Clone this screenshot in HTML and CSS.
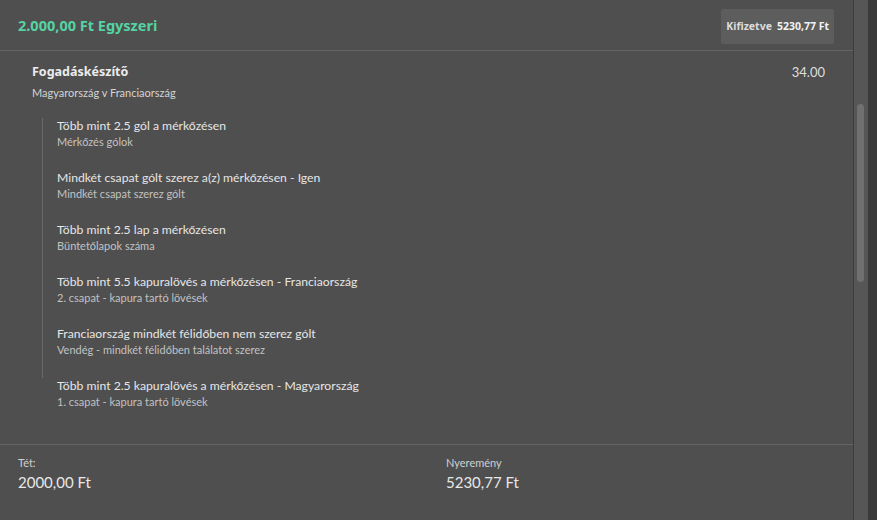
FILE: index.html
```html
<!DOCTYPE html>
<html lang="hu">

<head>
    <meta charset="UTF-8">
    <meta name="viewport" content="width=device-width, initial-scale=1.0">
    <title>Fogadás részletei</title>
    <link rel="stylesheet" href="styles.css">
</head>

<body>
    <div class="frame">
        <div class="panel">
            <header class="bet-header">
                <h1 class="bet-title">2.000,00 Ft Egyszeri</h1>
                <div class="paid-badge">
                    <span>Kifizetve</span>
                    <span class="paid-amount">5230,77 Ft</span>
                </div>
            </header>

            <section class="bet-body">
                <div class="market-row">
                    <div>
                        <h2 class="market-name">Fogadáskészítő</h2>
                        <div class="event-name">Magyarország v Franciaország</div>
                    </div>
                    <div class="odds">34.00</div>
                </div>

                <ul class="selections">
                    <li class="selection">
                        <div class="sel-title">Több mint 2.5 gól a mérkőzésen</div>
                        <div class="sel-sub">Mérkőzés gólok</div>
                    </li>
                    <li class="selection">
                        <div class="sel-title">Mindkét csapat gólt szerez a(z) mérkőzésen - Igen</div>
                        <div class="sel-sub">Mindkét csapat szerez gólt</div>
                    </li>
                    <li class="selection">
                        <div class="sel-title">Több mint 2.5 lap a mérkőzésen</div>
                        <div class="sel-sub">Büntetőlapok száma</div>
                    </li>
                    <li class="selection">
                        <div class="sel-title">Több mint 5.5 kapuralövés a mérkőzésen - Franciaország</div>
                        <div class="sel-sub">2. csapat - kapura tartó lövések</div>
                    </li>
                    <li class="selection">
                        <div class="sel-title">Franciaország mindkét félidőben nem szerez gólt</div>
                        <div class="sel-sub">Vendég - mindkét félidőben találatot szerez</div>
                    </li>
                    <li class="selection">
                        <div class="sel-title">Több mint 2.5 kapuralövés a mérkőzésen - Magyarország</div>
                        <div class="sel-sub">1. csapat - kapura tartó lövések</div>
                    </li>
                </ul>
            </section>

            <footer class="bet-footer">
                <div class="stat">
                    <div class="stat-label">Tét:</div>
                    <div class="stat-value">2000,00 Ft</div>
                </div>
                <div class="stat">
                    <div class="stat-label">Nyeremény</div>
                    <div class="stat-value">5230,77 Ft</div>
                </div>
            </footer>
        </div>

        <div class="scroll-track">
            <div class="scroll-thumb"></div>
        </div>
        <div class="edge"></div>
    </div>
</body>

</html>
```

FILE: styles.css
```css
body {
    margin: 0;
    padding: 0;
    font-family: 'Lato', 'Noto Sans', sans-serif;
    background: #4f4f4f;
    color: #e4e4e4;
}

.frame {
    display: flex;
    height: 520px;
    overflow: hidden;
}

.panel {
    flex: 1;
    display: flex;
    flex-direction: column;
    background: #4f4f4f;
}

/* Fejléc */
.bet-header {
    display: flex;
    justify-content: space-between;
    align-items: center;
    height: 51px;
    padding: 0 19px 0 18px;
    border-bottom: 1px solid #646464;
    box-sizing: border-box;
}

.bet-title {
    margin: 0;
    font-family: 'Noto Sans', sans-serif;
    font-size: 14.5px;
    font-weight: 700;
    color: #55d3a3;
}

.paid-badge {
    display: flex;
    gap: 5px;
    align-items: center;
    height: 35px;
    padding: 0 5px;
    margin-top: 2px;
    background: #5d5d5d;
    border-radius: 2px;
    font-family: 'Noto Sans', sans-serif;
    font-size: 10.5px;
    font-weight: 700;
    color: #dcdcdc;
}

.paid-amount {
    color: #f2f2f2;
}

/* Törzs */
.bet-body {
    flex: 1;
    padding: 12px 28px 0 32px;
}

.market-row {
    display: flex;
    justify-content: space-between;
}

.market-name {
    margin: 0;
    font-family: 'Noto Sans', sans-serif;
    font-size: 12.5px;
    font-weight: 700;
    line-height: 18px;
    color: #ececec;
}

.event-name {
    margin-top: 4px;
    font-size: 11px;
    line-height: 16px;
    color: #d4d4d4;
}

.odds {
    font-size: 13px;
    line-height: 18px;
    color: #dedede;
}

.selections {
    list-style: none;
    margin: 17px 0 0 10px;
    padding: 0;
}

.selection {
    padding: 0 0 20px 14px;
    border-left: 1px solid #6a6a6a;
}

/* a vonal az utolsó tétel tetejénél ér véget */
.selection:last-child {
    border-left-color: transparent;
    background: linear-gradient(#6a6a6a, #6a6a6a) no-repeat -1px 0 / 1px 6px;
    background-origin: border-box;
}

.sel-title {
    font-size: 12.2px;
    line-height: 16px;
    color: #e6e6e6;
}

.sel-sub {
    font-size: 11px;
    line-height: 16px;
    color: #c2c2c2;
}

/* Lábléc */
.bet-footer {
    display: grid;
    grid-template-columns: 428px 1fr;
    height: 76px;
    padding: 10px 18px 0;
    border-top: 1px solid #646464;
    box-sizing: border-box;
}

.stat-label {
    font-size: 11px;
    line-height: 16px;
    color: #cfcfcf;
}

.stat-value {
    margin-top: 1px;
    font-size: 15px;
    line-height: 20px;
    color: #e8e8e8;
}

/* Görgetősáv */
.scroll-track {
    width: 15px;
    border-left: 1px solid #3c3c3c;
    background: #565656;
    padding-top: 104px;
    box-sizing: border-box;
}

.scroll-thumb {
    width: 7px;
    height: 178px;
    margin-left: 3px;
    border-radius: 4px;
    background: #707070;
}

.edge {
    width: 9px;
    background: #3a3a3a;
}
```
